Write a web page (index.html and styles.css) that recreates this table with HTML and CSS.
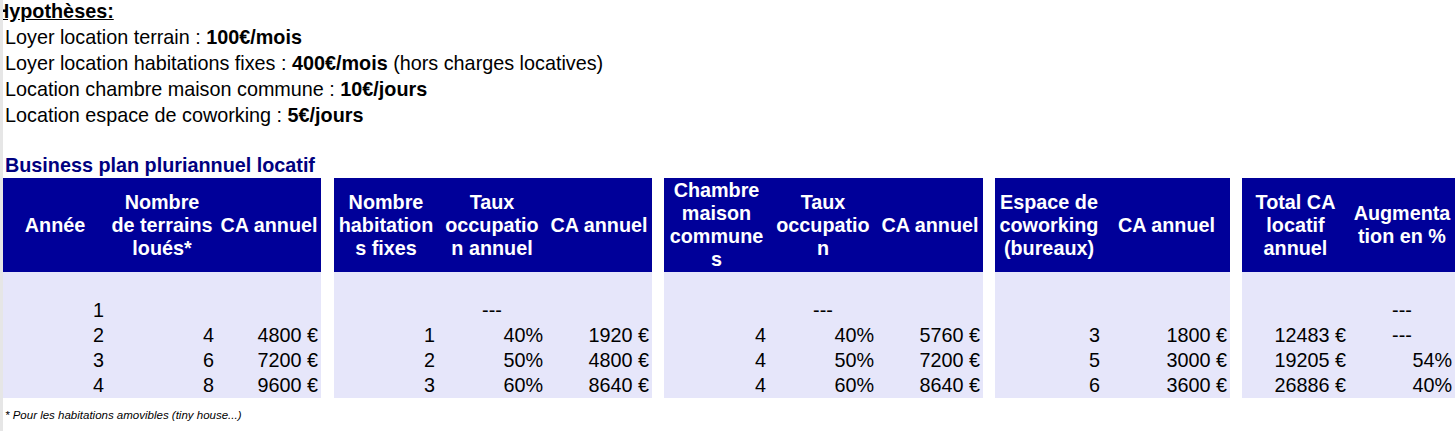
FILE: index.html
```html
<!DOCTYPE html>
<html lang="fr">
<head>
<meta charset="utf-8">
<title>Business plan pluriannuel locatif</title>
<link rel="stylesheet" href="styles.css">
</head>
<body>
<div class="page">
  <div class="hyp">
    <div class="hyp-title">Hypothèses:</div>
    <div>Loyer location terrain : <b>100€/mois</b></div>
    <div>Loyer location habitations fixes : <b>400€/mois</b> (hors charges locatives)</div>
    <div>Location chambre maison commune : <b>10€/jours</b></div>
    <div>Location espace de coworking : <b>5€/jours</b></div>
  </div>

  <div class="bp-title">Business plan pluriannuel locatif</div>

  <div class="tables">
    <div class="blk b1">
      <div class="h">Année</div>
      <div class="h">Nombre<br>de terrains<br>loués*</div>
      <div class="h">CA annuel</div>
      <div class="sp"></div>
      <div class="c">1</div><div class="c"></div><div class="c"></div>
      <div class="c">2</div><div class="c">4</div><div class="c">4800 €</div>
      <div class="c">3</div><div class="c">6</div><div class="c">7200 €</div>
      <div class="c">4</div><div class="c">8</div><div class="c">9600 €</div>
    </div>

    <div class="blk b2">
      <div class="h">Nombre<br>habitation<br>s fixes</div>
      <div class="h">Taux<br>occupatio<br>n annuel</div>
      <div class="h">CA annuel</div>
      <div class="sp"></div>
      <div class="c"></div><div class="c mid">---</div><div class="c"></div>
      <div class="c">1</div><div class="c">40%</div><div class="c">1920 €</div>
      <div class="c">2</div><div class="c">50%</div><div class="c">4800 €</div>
      <div class="c">3</div><div class="c">60%</div><div class="c">8640 €</div>
    </div>

    <div class="blk b3">
      <div class="h">Chambre<br>maison<br>commune<br>s</div>
      <div class="h">Taux<br>occupatio<br>n</div>
      <div class="h">CA annuel</div>
      <div class="sp"></div>
      <div class="c"></div><div class="c mid">---</div><div class="c"></div>
      <div class="c">4</div><div class="c">40%</div><div class="c">5760 €</div>
      <div class="c">4</div><div class="c">50%</div><div class="c">7200 €</div>
      <div class="c">4</div><div class="c">60%</div><div class="c">8640 €</div>
    </div>

    <div class="blk b4">
      <div class="h">Espace de<br>coworking<br>(bureaux)</div>
      <div class="h">CA annuel</div>
      <div class="sp"></div>
      <div class="c"></div><div class="c"></div>
      <div class="c">3</div><div class="c">1800 €</div>
      <div class="c">5</div><div class="c">3000 €</div>
      <div class="c">6</div><div class="c">3600 €</div>
    </div>

    <div class="blk b5">
      <div class="h">Total CA<br>locatif<br>annuel</div>
      <div class="h">Augmenta<br>tion en %</div>
      <div class="sp"></div>
      <div class="c"></div><div class="c mid">---</div>
      <div class="c">12483 €</div><div class="c mid">---</div>
      <div class="c">19205 €</div><div class="c">54%</div>
      <div class="c">26886 €</div><div class="c">40%</div>
    </div>
  </div>

  <div class="note">* Pour les habitations amovibles (tiny house...)</div>
</div>
</body>
</html>
```

FILE: styles.css
```css
html, body {
  margin: 0;
  padding: 0;
  background: #ffffff;
}

body {
  font-family: "Liberation Sans", Arial, sans-serif;
  color: #000000;
  border-left: 3px solid #e6e6e6;
  min-height: 431px;
  box-sizing: border-box;
}

.page {
  overflow: hidden;
}

.hyp {
  margin-top: -2px;
  padding-left: 2px;
  font-size: 19.8px;
  line-height: 26px;
  margin-bottom: 26px;
}

.hyp-title {
  font-weight: bold;
  text-decoration: underline;
  text-indent: -10px;
}

.bp-title {
  padding-left: 2px;
  font-size: 19.8px;
  line-height: 22px;
  font-weight: bold;
  color: #000080;
  margin-bottom: 2px;
}

.tables {
  display: flex;
  gap: 12px;
  font-size: 19.8px;
}

.blk {
  display: grid;
  background: #e6e6fa;
}

.b1 { grid-template-columns: 104px 110px 104px; margin-right: 1px; }
.b2 { grid-template-columns: 104px 108px 106px; }
.b3 { grid-template-columns: 105px 108px 106px; }
.b4 { grid-template-columns: 108px 127px; }
.b5 { grid-template-columns: 107px 106px; }

.h {
  height: 94px;
  background: #000099;
  color: #ffffff;
  font-weight: bold;
  line-height: 23px;
  text-align: center;
  white-space: nowrap;
  display: flex;
  align-items: center;
  justify-content: center;
}

.sp {
  grid-column: 1 / -1;
  height: 26px;
}

.c {
  height: 25px;
  line-height: 25px;
  text-align: right;
  padding-right: 3px;
  white-space: nowrap;
}

.c.mid {
  text-align: center;
  padding-right: 0;
}

.note {
  margin-top: 9px;
  padding-left: 2px;
  font-size: 11.5px;
  line-height: 16px;
  font-style: italic;
}
```
